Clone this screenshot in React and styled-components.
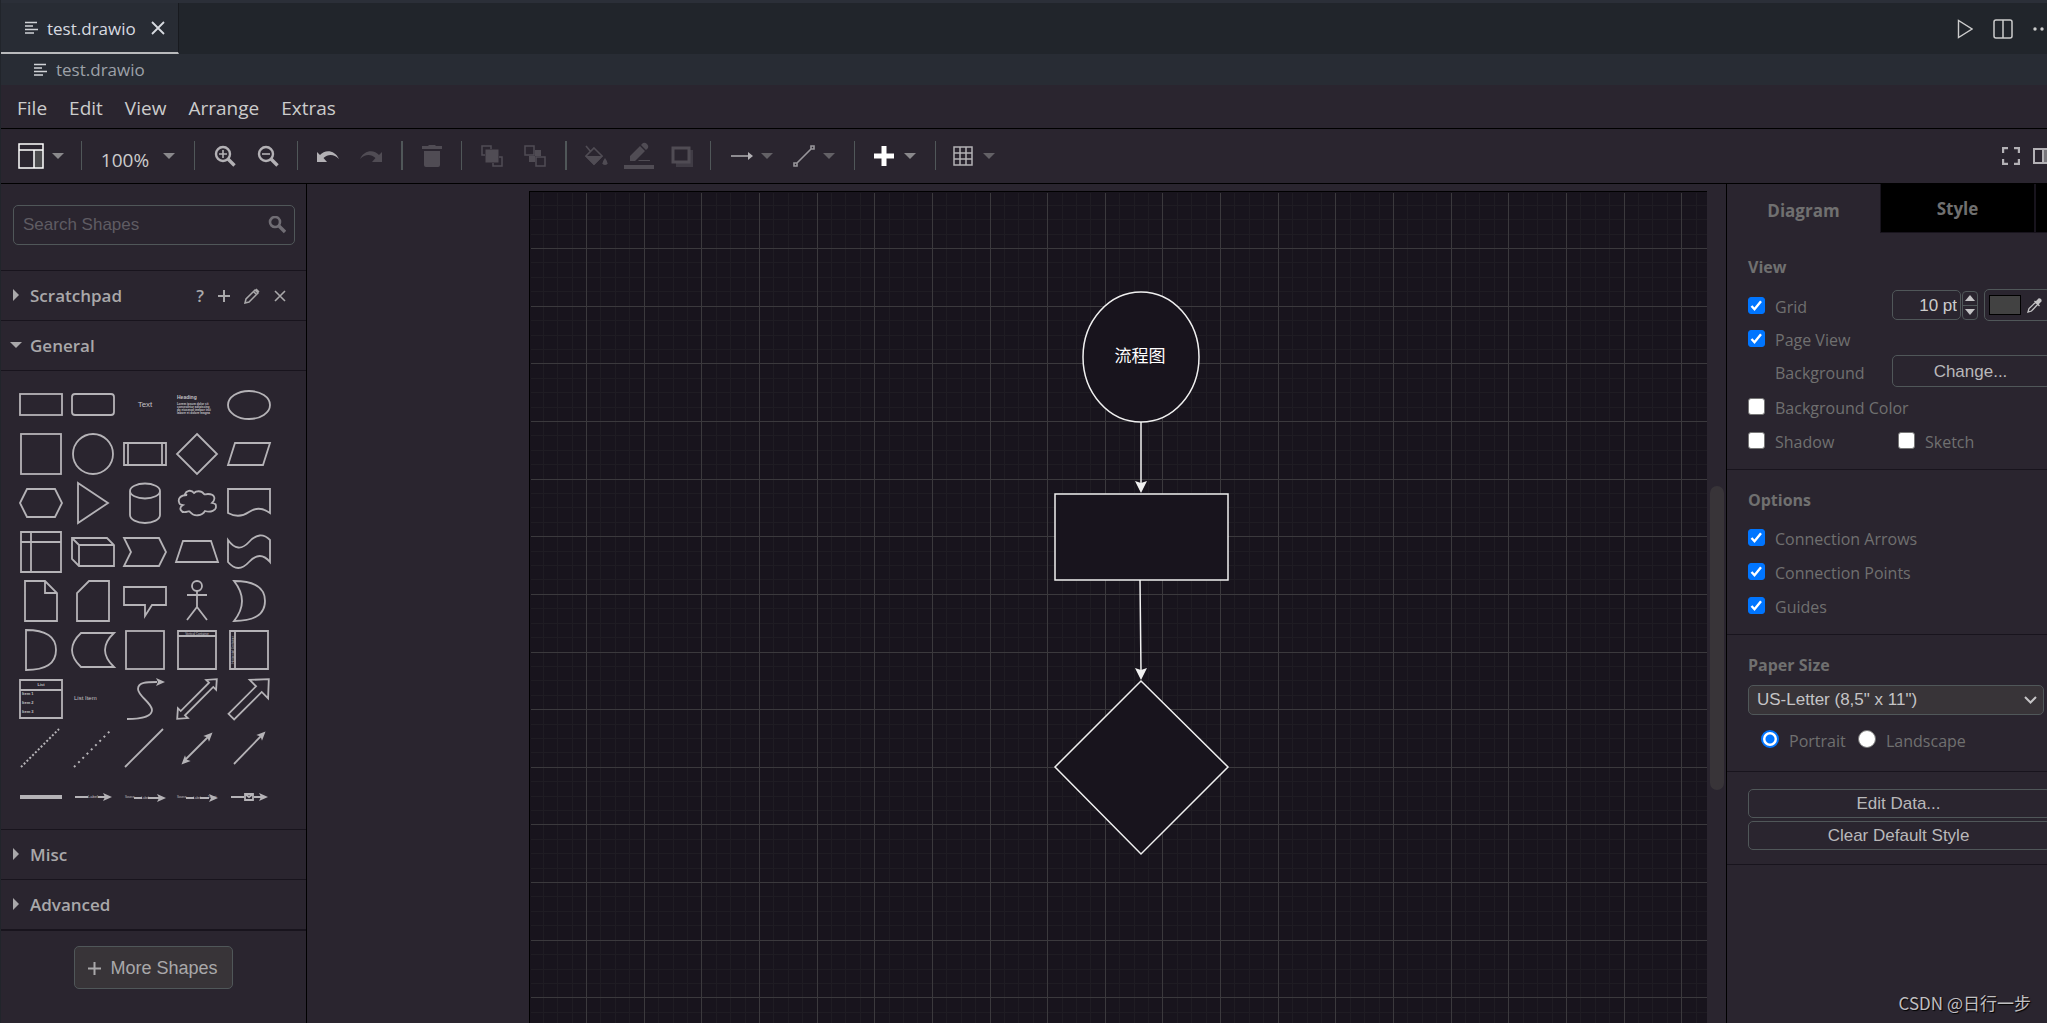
import React from "react";
import styled, { createGlobalStyle, css } from "styled-components";

const ui = `"Open Sans", "Noto Sans", "Noto Sans CJK SC", sans-serif`;
const arial = `"Liberation Sans", Arial, "Noto Sans CJK SC", sans-serif`;

const c = {
  editor: "#282c34",
  tabs: "#21252b",
  panel: "#2a252f",
  page: "#18141d",
  border: "#505759",
  raised: "#383438",
  line: "#18141d",
  text: "#cccccc",
  side: "#a9a8aa",
  dim: "#707070",
};

const Global = createGlobalStyle`
  * { box-sizing: border-box; }
  html, body, #root { height: 100%; }
  body { margin: 0; background: ${c.panel}; color: ${c.text}; font-family: ${ui}; overflow: hidden; }
  button, input, select { font: inherit; color: inherit; margin: 0; }
  svg { display: block; flex: none; }
`;

const Shell = styled.div`
  position: relative;
  display: flex;
  flex-direction: column;
  height: 100%;
  padding-top: 3px;
  border-left: 1px solid ${c.tabs};
  background: ${c.panel};
  box-shadow: inset 0 3px 0 #2b2f38;
  overflow: hidden;
`;

const Sash = styled.div`
  position: absolute;
  left: -1px;
  top: 497px;
  width: 1px;
  height: 32px;
  background: #3b4b5a;
`;

/* editor tabs */
const TabBar = styled.header`
  display: flex;
  flex: none;
  height: 51px;
  background: ${c.tabs};
`;

const FileTab = styled.div`
  display: flex;
  align-items: center;
  width: 178px;
  padding: 1px 0 0 24px;
  border-right: 1px solid #181a1f;
  border-bottom: 2px solid #b9babc;
  background: ${c.editor};
  color: #d7dae0;
  font-size: 17px;
  gap: 9px;
`;

const PlainButton = styled.button`
  display: flex;
  align-items: center;
  justify-content: center;
  padding: 0;
  border: 0;
  background: none;
`;

const CloseTab = styled(PlainButton)`
  margin-left: 6px;
`;

const EditorActions = styled.div`
  display: flex;
  align-items: center;
  gap: 20px;
  margin: 0 -6px 0 auto;
`;

const Breadcrumb = styled.nav`
  display: flex;
  flex: none;
  align-items: center;
  gap: 9px;
  height: 31px;
  padding-left: 33px;
  background: ${c.editor};
  color: #9da1a8;
  font-size: 17px;
`;

/* menu bar and toolbar */
const MenuBar = styled.nav`
  display: flex;
  flex: none;
  align-items: center;
  gap: 22px;
  height: 44px;
  padding: 2px 0 0 16px;
  border-bottom: 1px solid #000;
  font-size: 19px;
`;

const Toolbar = styled.div`
  display: flex;
  flex: none;
  align-items: center;
  height: 55px;
  padding-bottom: 1px;
  border-bottom: 1px solid #000;
`;

const ToolGroup = styled.div`
  display: flex;
  justify-content: center;
  flex: none;
  width: ${(p) => p.$width}px;
`;

const ToolButton = styled(PlainButton)`
  width: ${(p) => p.$width || 43}px;
  height: 40px;
  gap: 8px;
  color: #b3b1b5;
  opacity: ${(p) => (p.disabled ? 0.28 : 1)};
`;

const ZoomButton = styled(ToolButton)`
  gap: 14px;
  color: ${c.text};
  font-size: 19px;
`;

const ZoomText = styled.span`
  padding-top: 8px;
`;

const Divider = styled.div`
  flex: none;
  width: ${(p) => p.$width || 1}px;
  height: 29px;
  background: ${c.border};
`;

const ToolRight = styled.div`
  display: flex;
  align-items: center;
  flex: none;
  gap: 13px;
  margin: 0 -6px 0 auto;
`;

/* workspace */
const Workspace = styled.div`
  display: flex;
  flex: 1;
  min-height: 0;
`;

const Sidebar = styled.aside`
  display: flex;
  flex-direction: column;
  flex: none;
  width: 306px;
  border-right: 1px solid #000;
  color: ${c.side};
`;

const SearchArea = styled.div`
  padding: 21px 11px 25px 12px;
`;

const SearchBox = styled.div`
  display: flex;
  align-items: center;
  height: 40px;
  padding: 0 8px 0 9px;
  border: 1px solid ${c.border};
  border-radius: 5px;
`;

const SearchInput = styled.input`
  flex: 1;
  min-width: 0;
  padding: 0;
  border: 0;
  outline: 0;
  background: none;
  font-family: ${arial};
  font-size: 17px;
  &::placeholder { color: #5f5c63; opacity: 1; }
`;

const SectionBar = styled.div`
  display: flex;
  align-items: center;
  flex: none;
  height: 50px;
  padding-right: 20px;
  border-top: 1px solid ${c.line};
`;

const SectionToggle = styled(PlainButton)`
  flex: 1;
  justify-content: flex-start;
  height: 100%;
  gap: 8px;
  padding-left: 8px;
  font-size: 17px;
  font-weight: 600;
`;

const SectionTools = styled.div`
  display: flex;
  align-items: center;
  gap: 14px;
  font-size: 17px;
  font-weight: 600;
`;

const Palette = styled.div`
  display: grid;
  flex: none;
  grid-template-columns: repeat(5, 52px);
  grid-auto-rows: 49px;
  padding: 10px 0 7px 14px;
  border-top: 1px solid ${c.line};
`;

const SidebarFoot = styled.div`
  display: flex;
  justify-content: center;
  padding-top: 15px;
  border-top: 2px solid ${c.line};
`;

const MoreShapes = styled.button`
  display: flex;
  align-items: center;
  gap: 9px;
  height: 43px;
  padding: 2px 14px 0 13px;
  border: 1px solid ${c.border};
  border-radius: 5px;
  background: ${c.raised};
  font-family: ${arial};
  font-size: 18px;
`;

const CanvasArea = styled.main`
  display: flex;
  flex: 1;
  min-width: 0;
  padding: 7px 0 0 222px;
`;

const Page = styled.div`
  flex: 1;
  min-width: 0;
  border: 1px solid #000;
  border-width: 1px 0 0 1px;
  background: ${c.page};
  overflow: hidden;
`;

const ScrollTrack = styled.div`
  flex: none;
  width: 19px;
  padding: 302px 2px 0 3px;
`;

const ScrollThumb = styled.div`
  height: 304px;
  border-radius: 7px;
  background: ${c.raised};
`;

/* format panel */
const Panel = styled.aside`
  flex: none;
  width: 321px;
  border-left: 1px solid #000;
  color: ${c.dim};
  font-size: 16px;
  overflow: hidden;
`;

const PanelTabs = styled.div`
  display: grid;
  grid-template-columns: 153px 155px 154px;
  height: 49px;
`;

const PanelTab = styled.button`
  padding: 4px 0 0;
  border: 0;
  background: none;
  font-size: 17px;
  font-weight: 700;
  ${(p) =>
    !p.$active &&
    css`
      padding-top: 1px;
      border-left: 1px solid ${c.line};
      border-right: 1px solid ${c.line};
      border-bottom: 1px solid ${c.line};
      background: #000;
    `}
`;

const Section = styled.section`
  width: 344px;
  padding: ${(p) => p.$top || 14}px 20px ${(p) => p.$bottom || 12}px 21px;
  border-bottom: 1px solid ${c.line};
`;

const Heading = styled.h2`
  height: 32px;
  margin: 0 0 4px;
  font-size: 16px;
  line-height: 32px;
  font-weight: 700;
`;

const Row = styled.div`
  display: flex;
  align-items: center;
  height: ${(p) => p.$height || 34}px;
  padding-left: ${(p) => p.$indent || 0}px;
`;

const OptionLabel = styled.label`
  display: flex;
  align-items: center;
  gap: 10px;
  width: ${(p) => (p.$width ? p.$width + "px" : "auto")};
`;

const OptionText = styled.span`
  padding-top: 4px;
`;

const Check = styled.input`
  appearance: none;
  flex: none;
  width: 17px;
  height: 17px;
  border: 1px solid #767676;
  border-radius: 3px;
  background: #fff;
  &:checked {
    border-color: #0075ff;
    background: #0075ff
      url("data:image/svg+xml,%3Csvg xmlns='http://www.w3.org/2000/svg' viewBox='0 0 15 15'%3E%3Cpath d='M2.5 8l3 3.2 6.500-8' fill='none' stroke='white' stroke-width='2.4'/%3E%3C/svg%3E")
      center / 15px 15px no-repeat;
  }
`;

const Radio = styled.input`
  appearance: none;
  flex: none;
  width: 18px;
  height: 18px;
  border: 1px solid #767676;
  border-radius: 50%;
  background: #fff;
  &:checked {
    border: 2px solid #0075ff;
    background: radial-gradient(circle, #0075ff 0 4px, #fff 5px);
  }
`;

const Controls = styled.div`
  display: flex;
  align-items: center;
  margin-left: auto;
`;

const SizeInput = styled.input`
  width: 69px;
  height: 30px;
  padding: 2px 3px 0;
  border: 1px solid ${c.border};
  border-radius: 5px;
  background: none;
  color: ${c.text};
  font-family: ${arial};
  font-size: 17px;
  text-align: right;
`;

const Spinner = styled.div`
  display: grid;
  grid-template-rows: 1fr 1fr;
  width: 16px;
  height: 29px;
  margin: 0 6px 0 1px;
  border: 1px solid ${c.border};
  border-radius: 4px;
`;

const SpinButton = styled(PlainButton)`
  & + & { border-top: 1px solid ${c.border}; }
`;

const ColorButton = styled.button`
  display: flex;
  align-items: center;
  gap: 6px;
  width: 67px;
  height: 32px;
  padding: 0 4px;
  border: 1px solid ${c.border};
  border-radius: 5px;
  background: none;
`;

const Swatch = styled.span`
  width: 32px;
  height: 20px;
  border: 1px solid #000;
  background: #424242;
`;

const FormatButton = styled.button`
  width: ${(p) => (p.$width ? p.$width + "px" : "100%")};
  height: ${(p) => p.$height || 29}px;
  padding: ${(p) => (p.$height ? 2 : 0)}px 2px 0 0;
  border: 1px solid ${c.border};
  border-radius: 5px;
  background: none;
  color: #b9b8ba;
  font-family: ${arial};
  font-size: 17px;
`;

const ButtonStack = styled.div`
  display: grid;
  gap: 3px;
`;

const SelectWrap = styled.div`
  display: grid;
  width: 296px;
  align-items: center;
  & > * { grid-area: 1 / 1; }
  & > svg { justify-self: end; margin-right: 7px; pointer-events: none; }
`;

const PaperSelect = styled.select`
  appearance: none;
  width: 100%;
  height: 30px;
  padding: 0 8px 1px;
  border: 1px solid ${c.border};
  border-radius: 5px;
  background: ${c.raised};
  color: #c5c4c6;
  font-family: ${arial};
  font-size: 17px;
`;

const Watermark = styled.div`
  position: absolute;
  right: 16px;
  bottom: 8px;
  color: #c0bfc1;
  font-family: "Noto Sans CJK SC", sans-serif;
  font-size: 17px;
  line-height: 24px;
  text-shadow: 1px 1px 1px #000;
`;

/* icons */
const Icon = ({ w = 22, h = w, children, ...rest }) => (
  <svg width={w} height={h} viewBox={`0 0 ${w} ${h}`} fill="none" stroke="currentColor" strokeWidth="2" aria-hidden="true" {...rest}>
    {children}
  </svg>
);

const Caret = ({ color = "#8a898c" }) => (
  <Icon w={12} h={8} stroke="none" fill={color}><path d="M0 1h12L6 7z" /></Icon>
);

const FileIcon = () => (
  <Icon w={13} h={14} stroke="#d0d2d6" strokeWidth="1.600"><path d="M0 1.500h12M0 5h8M0 8.500h13M0 12h9" /></Icon>
);

const PlayIcon = () => (
  <Icon w={16} h={20} strokeWidth="1.400"><path d="M1.500 1.500v17L15 10z" /></Icon>
);

const SplitIcon = () => (
  <Icon w={20} h={20} strokeWidth="1.500"><rect x="1" y="1" width="18" height="18" rx="2" /><path d="M10 1v18" /></Icon>
);

const MoreIcon = () => (
  <Icon w={20} h={6} stroke="none" fill="currentColor"><circle cx="2" cy="3" r="1.700" /><circle cx="9" cy="3" r="1.700" /><circle cx="16" cy="3" r="1.700" /></Icon>
);

const LayoutIcon = () => (
  <Icon w={26} stroke="#fff" strokeWidth="1.500">
    <path d="M16 7h9v18h-9z" fill="#4b4b4d" stroke="none" />
    <path d="M1 1h24v24H1zM1 7h24M16 7v18" />
  </Icon>
);

const ZoomIcon = ({ plus }) => (
  <Icon>
    <circle cx="9" cy="9" r="7" strokeWidth="2.400" />
    <path d={plus ? "M5 9h8M9 5v8" : "M5 9h8"} strokeWidth="1.600" />
    <path d="M14 14l6.500 6.500" strokeWidth="3.400" />
  </Icon>
);

const UndoIcon = ({ flip }) => (
  <Icon h={14} stroke="none" fill="currentColor">
    <path transform={flip ? "translate(22 0) scale(-1 1)" : undefined} d="M0 3l3 3C8 0 18 1 22 10 17 5 11 5 6.500 9L10 13H0z" />
  </Icon>
);

const TrashIcon = () => (
  <Icon stroke="none" fill="currentColor"><path d="M1 1h6l1-1h6l1 1h6v3H1zM3 6h16v14q0 2-2 2H5q-2 0-2-2z" /></Icon>
);

const FrontIcon = () => (
  <Icon strokeWidth="1.500"><path d="M4 10H1V1h9v3M18 12h3v9h-9v-3" /><path d="M4.500 4.500h13v13h-13z" fill="currentColor" stroke="none" /></Icon>
);

const BackIcon = () => (
  <Icon strokeWidth="1.500"><path d="M1 1h9v9H1zM12 12h9v9h-9z" /><path d="M11 5h6v6h-6v6H5v-6h6z" fill="currentColor" stroke="none" /></Icon>
);

const FillIcon = () => (
  <Icon w={24} h={22} strokeWidth="1.600">
    <path d="M2 1l5 6M10 3l8 8-8 8-8-8z" /><path d="M1 11h18l-9 9z" fill="currentColor" stroke="none" />
    <path d="M21 13q5 7 0 7t0-7z" fill="currentColor" stroke="none" />
  </Icon>
);

const PencilLineIcon = () => (
  <Icon w={30} h={28} stroke="none" fill="currentColor">
    <path d="M6 14L16 4l5 5-10 10H6zM17 3l2-2q2-1 4 1t1 4l-2 2zM15 18h11v1H14zM0 23h30v4H0z" />
  </Icon>
);

const ShadowIcon = () => (
  <Icon><path d="M5 5h17v17H5z" fill="currentColor" stroke="none" opacity="0.600" /><rect x="2" y="3" width="16" height="14" strokeWidth="3" fill={c.panel} /></Icon>
);

const ArrowIcon = () => (
  <Icon h={10} stroke="#8e8c91"><path d="M0 5h18" /><path d="M17 1l5 4-5 4z" fill="#b3b1b5" stroke="none" /></Icon>
);

const ConnectorIcon = () => (
  <Icon stroke="#98969b" strokeWidth="1.600"><path d="M4 18L18 4M1 18h3v3H1zM18 1h3v3h-3z" /></Icon>
);

const PlusIcon = () => (
  <Icon stroke="#fff" strokeWidth="5"><path d="M10 1v20M0 11h20" /></Icon>
);

const GridIcon = () => (
  <Icon strokeWidth="1.500"><path d="M1 2h18v18H1zM7 2v18M13 2v18M1 8h18M1 14h18" /></Icon>
);

const FullscreenIcon = () => (
  <Icon w={18} strokeWidth="2.400"><path d="M1 6V1h5M12 1h5v5M17 12v5h-5M6 17H1v-5" /></Icon>
);

const FormatIcon = () => (
  <Icon w={20} h={16}><path d="M10 1h9v14h-9z" fill="#77757a" /><path d="M1 1h18v14H1z" /></Icon>
);

const SearchIcon = () => (
  <Icon w={18} stroke="#706d74" strokeWidth="2.600"><circle cx="7" cy="6" r="5" /><path d="M11 10l6 6" strokeWidth="3.400" /></Icon>
);

const FoldIcon = ({ open }) => (
  <Icon w={13} h={13} stroke="none" fill={c.side}><path d={open ? "M1 3h12L7 9z" : "M4 0l6 6-6 6z"} /></Icon>
);

const AddIcon = ({ size = 12 }) => (
  <Icon w={size}><path d={`M${size / 2} 0v${size}M0 ${size / 2}h${size}`} /></Icon>
);

const EditIcon = () => (
  <Icon w={16} strokeWidth="1.500"><path d="M1 15l1-4L11 2l3 3-9 9zM9.500 3.500l3 3M12 1l3 3" /></Icon>
);

const CrossIcon = ({ size = 12, width = 1.6 }) => (
  <Icon w={size} strokeWidth={width}><path d={`M1 1l${size - 2} ${size - 2}M${size - 1} 1L1 ${size - 1}`} /></Icon>
);

const DropperIcon = () => (
  <Icon w={15} stroke="#c5c4c6" strokeWidth="1.300">
    <path d="M1 14l1-3.500L9 4l2 2-6.500 7zM7.500 3l5 5" /><path d="M9 4l3-3q2 0 2 2l-3 3z" fill="#c5c4c6" />
  </Icon>
);

const ChevronIcon = () => (
  <Icon w={13} h={8} stroke="#c5c4c6"><path d="M1 1l5.500 5.500L12 1" /></Icon>
);

/* shape palette: every drawing is centred on the origin of its cell */
const T = (p) => <text stroke="none" fill="#c4c2c6" fontFamily={arial} {...p} />;
const head = (x, y, a) => (
  <path d="M5 0L-4-4-2 0-4 4z" fill="#b5b3b7" stroke="none" transform={`translate(${x} ${y}) rotate(${a})`} />
);

const shapes = [
  ["Rectangle", <rect x="-21" y="-11" width="42" height="21" />],
  ["Rounded rectangle", <rect x="-21" y="-11" width="42" height="21" rx="3" />],
  ["Text", <T x="0" y="2" fontSize="8" textAnchor="middle">Text</T>],
  ["Textbox", <>
    <T x="-20" y="-6" fontSize="5" fontWeight="700">Heading</T>
    <g fontWeight="700">
      <T x="-20" y="0" fontSize="3">Lorem ipsum dolor sit</T>
      <T x="-20" y="3" fontSize="3">consectetur adipiscing</T>
      <T x="-20" y="6" fontSize="3">do eiusmod tempor inci</T>
      <T x="-20" y="9" fontSize="3">labore et dolore magna</T>
    </g>
  </>],
  ["Ellipse", <ellipse rx="21" ry="14" />],
  ["Square", <rect x="-20" y="-20" width="40" height="40" />],
  ["Circle", <circle r="20" />],
  ["Process", <path d="M-21-11h42v22h-42zM-17-11v22M17-11v22" />],
  ["Diamond", <path d="M0-20L20 0 0 20-20 0z" />],
  ["Parallelogram", <path d="M-21 11l7-22h35l-7 22z" />],
  ["Hexagon", <path d="M-21 0l7-14h28l7 14-7 14h-28z" />],
  ["Triangle", <path d="M-15-20L15 0-15 20z" />],
  ["Cylinder", <path d="M-15-12a15 7.500 0 0 1 30 0v24a15 8 0 0 1-30 0zM-15-12a15 7.500 0 0 0 30 0" />],
  ["Cloud", <path d="M-10-8C-17-8-19-4-18-1s0 2 4 3c-5 3-2 8 3 7 5-1 3-1 4 0 4 5 12 4 15-1 6 2 11-1 11-4s0-3-4-4c4-4 3-9-4-9-3 0-3 1-4 0-3-4-8-3-10-1-3-4-8-2-9 1z" />],
  ["Document", <path d="M-21-14h42v24Q10 2 0 9T-21 10z" />],
  ["Internal storage", <path d="M-20-20h40v40h-40zM-10-20v40M-20-10h40" />],
  ["Cube", <path d="M-21-14h35l7 7v21h-35l-7-7zM-21-14l7 7h35M-14-7v21" />],
  ["Step", <path d="M-21-14h35l7 14-7 14h-35l7-14z" />],
  ["Trapezoid", <path d="M-21 10l7-21h28l7 21z" />],
  ["Tape", <path d="M-21-12Q-11 2 0-10T21-12v22Q11-2 0 10T-21 10z" />],
  ["Note", <path d="M-16-20H4L16-8v28h-32zM4-20v12h12" />],
  ["Card", <path d="M-4-20h20v40h-32V-8z" />],
  ["Callout", <path d="M-21-14h42V4H7L0 15V4h-21z" />],
  ["Actor", <><circle cy="-15" r="5" /><path d="M0-10V6M-10-6h20M-10 19L0 6l10 13" /></>],
  ["Or", <path d="M-15-20Q16-20 16 0T-15 20Q1 0-15-20z" />],
  ["And", <path d="M-15-20Q15-20 15 0T-15 20z" />],
  ["Data storage", <path d="M-12-17h33Q3 0 21 17h-33Q-30 0-12-17z" />],
  ["Container", <rect x="-19" y="-19" width="38" height="38" />],
  ["Vertical container", <><path d="M-19-19h38v38h-38zM-19-14h38" /><T y="-15" fontSize="3" textAnchor="middle">Vertical Container</T></>],
  ["Horizontal container", <><path d="M-19-19h38v38h-38zM-14-19v38" /><T transform="rotate(-90)" y="-15" fontSize="3" textAnchor="middle">Horizontal Container</T></>],
  ["List", <>
    <path d="M-21-19h42v38h-42zM-21-9h42" />
    <g fontWeight="700">
      <T y="-13" fontSize="4" textAnchor="middle">List</T>
      <T x="-19" y="-4" fontSize="4">Item 1</T>
      <T x="-19" y="5" fontSize="4">Item 2</T>
      <T x="-19" y="14" fontSize="4">Item 3</T>
    </g>
  </>],
  ["List item", <T x="-19" y="1" fontSize="6">List Item</T>],
  ["Curve", <><path d="M-18 20C-5 20 7 18 7 11S-7-3-7-10 2-17 12-17" />{head(15, -17, 0)}</>],
  ["Bidirectional arrow", <path transform="rotate(-45)" d="M-28 0l8-7v4h40v-4l8 7-8 7V3h-40v4z" />],
  ["Arrow", <path transform="rotate(-45)" d="M-25-4h39v-9L28 0 14 13V4h-39z" />],
  ["Dashed line", <path d="M-20 19L18-19" strokeDasharray="2 2" strokeWidth="2" />],
  ["Dotted line", <path d="M-19 19L17-17" strokeDasharray="2 4" strokeWidth="2" />],
  ["Line", <path d="M-20 19L18-19" />],
  ["Bidirectional connector", <><path d="M-13 13L13-13" />{head(12, -12, -45)}{head(-12, 13, 135)}</>],
  ["Directional connector", <><path d="M-15 16L13-13" />{head(13, -13, -45)}</>],
  ["Link", <path d="M-21 0h42" strokeWidth="4" />],
  ["Connector with label", <><path d="M-18 0H-5M5 0h10" /><T y="1" fontSize="4" textAnchor="middle">Label</T>{head(14, 0, 0)}</>],
  ["Connector with 2 labels", <><path d="M-11 1h8M3 1h15" /><T x="-20" y="1" fontSize="3">Source</T><T y="2" fontSize="3" textAnchor="middle">Label</T>{head(16, 1, 0)}</>],
  ["Connector with 3 labels", <><path d="M-11 1h8M3 1h9" /><T x="-20" y="1" fontSize="3">Source</T><T y="2" fontSize="3" textAnchor="middle">Label</T><T x="11" y="1" fontSize="3">Target</T>{head(16, 1, 0)}</>],
  ["Connector with symbol", <><path d="M-18 0h13M5 0h10M-4-3h8v6h-8zM-4-3l4 3 4-3" />{head(14, 0, 0)}</>],
];

const Shape = ({ name, children }) => (
  <PlainButton type="button" aria-label={name}>
    <svg width="52" height="49" viewBox="-26 -24 52 49" fill="none" stroke="#b5b3b7" strokeWidth="1.800">{children}</svg>
  </PlainButton>
);

/* canvas */
const STEP = 57.64;
const at = (n) => Math.round(n * STEP - 1.6);
const counts = Array.from({ length: 160 }, (_, i) => i / 4);
const minor = counts.filter((n) => n % 1 && n > 0.2);
const major = counts.filter((n) => n % 1 === 0 && n > 0);
const lines = (list) => list.map((n) => `M${at(n)} 0V2400M0 ${at(n)}H2400`).join("");

const Diagram = () => (
  <svg width="100%" height="100%" role="img" aria-label="Flow chart">
    <g shapeRendering="crispEdges" transform="translate(0.5 0.5)" fill="none">
      <path d={lines(minor)} stroke="#1f1c23" strokeWidth="1" />
      <path d={lines(major)} stroke="#3b393d" strokeWidth="1" />
    </g>
    <g fill={c.page} stroke="#f0f0f0" strokeWidth="1.500">
      <ellipse cx="611" cy="165" rx="58" ry="65" />
      <path d="M611 230V292M610 388L611 480" />
      <rect x="525" y="302" width="173" height="86" />
      <path d="M611 489L698 575 611 662 525 575z" />
    </g>
    <path d="M611 301l-6-12 6 2 6-2zM611 488l-6-12 6 2 6-2z" fill="#f0f0f0" />
    <text x="610" y="170" fill="#fff" fontFamily={arial} fontSize="17" textAnchor="middle">流程图</text>
  </svg>
);

const Option = ({ label, width, checked, radio, name }) => {
  const Box = radio ? Radio : Check;
  return (
    <OptionLabel $width={width}>
      <Box type={radio ? "radio" : "checkbox"} name={name} defaultChecked={checked} />
      <OptionText>{label}</OptionText>
    </OptionLabel>
  );
};

export default function App() {
  return (
    <>
      <Global />
      <Shell>
        <TabBar>
          <FileTab>
            <FileIcon />
            <span>test.drawio</span>
            <CloseTab type="button" aria-label="Close"><CrossIcon size={14} width={1.8} /></CloseTab>
          </FileTab>
          <EditorActions>
            <PlainButton type="button" aria-label="Run"><PlayIcon /></PlainButton>
            <PlainButton type="button" aria-label="Split editor"><SplitIcon /></PlainButton>
            <PlainButton type="button" aria-label="More actions"><MoreIcon /></PlainButton>
          </EditorActions>
        </TabBar>
        <Breadcrumb><FileIcon /><span>test.drawio</span></Breadcrumb>
        <MenuBar>
          {["File", "Edit", "View", "Arrange", "Extras"].map((m) => <PlainButton type="button" key={m}>{m}</PlainButton>)}
        </MenuBar>
        <Toolbar>
          <ToolGroup $width={80}><ToolButton $width={80} aria-label="View"><LayoutIcon /><Caret /></ToolButton></ToolGroup>
          <Divider />
          <ToolGroup $width={112}><ZoomButton $width={104}><ZoomText>100%</ZoomText><Caret /></ZoomButton></ToolGroup>
          <Divider />
          <ToolGroup $width={102}>
            <ToolButton aria-label="Zoom in"><ZoomIcon plus /></ToolButton>
            <ToolButton aria-label="Zoom out"><ZoomIcon /></ToolButton>
          </ToolGroup>
          <Divider />
          <ToolGroup $width={103}>
            <ToolButton aria-label="Undo"><UndoIcon /></ToolButton>
            <ToolButton aria-label="Redo" disabled><UndoIcon flip /></ToolButton>
          </ToolGroup>
          <Divider $width={2} />
          <ToolGroup $width={58}><ToolButton aria-label="Delete" disabled><TrashIcon /></ToolButton></ToolGroup>
          <Divider />
          <ToolGroup $width={103}>
            <ToolButton aria-label="To front" disabled><FrontIcon /></ToolButton>
            <ToolButton aria-label="To back" disabled><BackIcon /></ToolButton>
          </ToolGroup>
          <Divider $width={2} />
          <ToolGroup $width={143}>
            <ToolButton aria-label="Fill color" disabled><FillIcon /></ToolButton>
            <ToolButton aria-label="Line color" disabled><PencilLineIcon /></ToolButton>
            <ToolButton aria-label="Shadow" disabled><ShadowIcon /></ToolButton>
          </ToolGroup>
          <Divider />
          <ToolGroup $width={143}>
            <ToolButton $width={62} aria-label="Connection"><ArrowIcon /><Caret color="#636166" /></ToolButton>
            <ToolButton $width={62} aria-label="Waypoints"><ConnectorIcon /><Caret color="#636166" /></ToolButton>
          </ToolGroup>
          <Divider />
          <ToolGroup $width={80}><ToolButton $width={62} aria-label="Insert"><PlusIcon /><Caret /></ToolButton></ToolGroup>
          <Divider />
          <ToolGroup $width={76}><ToolButton $width={62} aria-label="Table"><GridIcon /><Caret color="#636166" /></ToolButton></ToolGroup>
          <ToolRight>
            <ToolButton $width={18} aria-label="Fullscreen"><FullscreenIcon /></ToolButton>
            <ToolButton $width={20} aria-label="Format"><FormatIcon /></ToolButton>
          </ToolRight>
        </Toolbar>
        <Workspace>
          <Sidebar>
            <SearchArea>
              <SearchBox>
                <SearchInput type="text" aria-label="Search Shapes" placeholder="Search Shapes" />
                <SearchIcon />
              </SearchBox>
            </SearchArea>
            <SectionBar>
              <SectionToggle type="button"><FoldIcon /><span>Scratchpad</span></SectionToggle>
              <SectionTools>
                <PlainButton type="button">?</PlainButton>
                <PlainButton type="button" aria-label="Add"><AddIcon /></PlainButton>
                <PlainButton type="button" aria-label="Edit"><EditIcon /></PlainButton>
                <PlainButton type="button" aria-label="Close"><CrossIcon /></PlainButton>
              </SectionTools>
            </SectionBar>
            <SectionBar><SectionToggle type="button"><FoldIcon open /><span>General</span></SectionToggle></SectionBar>
            <Palette>
              {shapes.map(([name, art]) => <Shape key={name} name={name}>{art}</Shape>)}
            </Palette>
            <SectionBar><SectionToggle type="button"><FoldIcon /><span>Misc</span></SectionToggle></SectionBar>
            <SectionBar><SectionToggle type="button"><FoldIcon /><span>Advanced</span></SectionToggle></SectionBar>
            <SidebarFoot>
              <MoreShapes type="button"><AddIcon size={13} /><span>More Shapes</span></MoreShapes>
            </SidebarFoot>
          </Sidebar>
          <CanvasArea><Page><Diagram /></Page></CanvasArea>
          <ScrollTrack><ScrollThumb /></ScrollTrack>
          <Panel>
            <PanelTabs>
              <PanelTab type="button" $active>Diagram</PanelTab>
              <PanelTab type="button">Style</PanelTab>
              <PanelTab type="button" aria-label="Arrange" />
            </PanelTabs>
            <Section $top={18}>
              <Heading>View</Heading>
              <Row $height={36}>
                <Option label="Grid" checked />
                <Controls>
                  <SizeInput aria-label="Grid size" defaultValue="10 pt" />
                  <Spinner>
                    <SpinButton type="button" aria-label="Increase"><Icon w={10} h={6} stroke="none" fill="#c5c4c6"><path d="M0 6h10L5 0z" /></Icon></SpinButton>
                    <SpinButton type="button" aria-label="Decrease"><Icon w={10} h={6} stroke="none" fill="#c5c4c6"><path d="M0 0h10L5 6z" /></Icon></SpinButton>
                  </Spinner>
                  <ColorButton type="button" aria-label="Grid color"><Swatch /><DropperIcon /></ColorButton>
                </Controls>
              </Row>
              <Row $height={30}><Option label="Page View" checked /></Row>
              <Row $height={36} $indent={27}>
                <OptionText>Background</OptionText>
                <Controls><FormatButton type="button" $width={159} $height={32}>Change...</FormatButton></Controls>
              </Row>
              <Row><Option label="Background Color" /></Row>
              <Row><Option label="Shadow" width={150} /><Option label="Sketch" /></Row>
            </Section>
            <Section>
              <Heading>Options</Heading>
              <Row><Option label="Connection Arrows" checked /></Row>
              <Row><Option label="Connection Points" checked /></Row>
              <Row><Option label="Guides" checked /></Row>
            </Section>
            <Section $bottom={8}>
              <Heading>Paper Size</Heading>
              <SelectWrap>
                <PaperSelect aria-label="Paper Size"><option>US-Letter (8,5" x 11")</option></PaperSelect>
                <ChevronIcon />
              </SelectWrap>
              <Row $height={48} $indent={13}>
                <Option radio name="orientation" label="Portrait" width={97} checked />
                <Option radio name="orientation" label="Landscape" />
              </Row>
            </Section>
            <Section $top={17} $bottom={14}>
              <ButtonStack>
                <FormatButton type="button">Edit Data...</FormatButton>
                <FormatButton type="button">Clear Default Style</FormatButton>
              </ButtonStack>
            </Section>
          </Panel>
        </Workspace>
        <Sash />
        <Watermark>CSDN @日行一步</Watermark>
      </Shell>
    </>
  );
}
